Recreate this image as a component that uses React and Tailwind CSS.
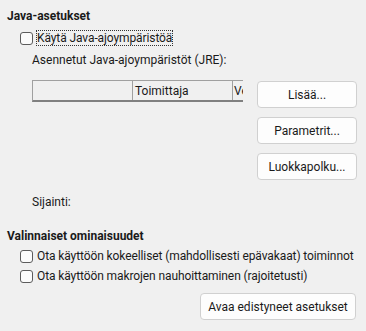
export default function App() {
    const font = { fontFamily: 'Roboto, "Noto Sans", sans-serif' }

    const Check = ({ children, focus }) => (
        <label className="flex items-center h-[20px] pl-[20px] gap-[4px] whitespace-nowrap tracking-[-0.1px]">
            <span className="shrink-0 w-[13px] h-[13px] rounded-[3px] border border-[#5c5c5c] bg-[#fbfbfb]" />
            <span className={focus ? 'outline outline-1 outline-dotted outline-[#333] leading-[14px]' : ''}>{children}</span>
        </label>
    )

    const Btn = ({ children, className = '' }) => (
        <button className={`h-[27px] rounded-[4px] border border-[#d0d0d0] bg-[#fdfdfd] text-[#1a1a1a] ${className}`}>
            {children}
        </button>
    )

    return (
        <div className="w-[366px] h-[331px] bg-[#f0f0f0] text-[12px] leading-[16px] text-[#1a1a1a] overflow-hidden" style={font}>
            <div className="pt-[8px] pl-[7px] font-bold">Java-asetukset</div>
            <div className="mt-[4px]">
                <Check focus>Käytä Java-ajoympäristöä</Check>
            </div>
            <div className="pl-[32px] mt-[4px]">
                <div>Asennetut Java-ajoympäristöt (JRE):</div>
                <div className="flex mt-[12px]">
                    <div className="w-[211px] shrink-0">
                        <div className="h-[22px] flex border-t border-l border-[#a0a0a0] border-b-2 border-b-[#808080] overflow-hidden">
                            <div className="shrink-0 w-[100px] border-r border-[#a0a0a0]" />
                            <div className="shrink-0 w-[100px] border-r border-[#a0a0a0] pl-[2px] leading-[20px]">Toimittaja</div>
                            <div className="shrink-0 w-[10px] pl-[1px] leading-[20px] whitespace-nowrap overflow-hidden">Ve</div>
                        </div>
                    </div>
                    <div className="ml-[14px] mt-[1px] flex flex-col gap-[9px]">
                        <Btn className="w-[100px]">Lisää...</Btn>
                        <Btn className="w-[100px]">Parametrit...</Btn>
                        <Btn className="w-[100px]">Luokkapolku...</Btn>
                    </div>
                </div>
                <div className="mt-[14px]">Sijainti:</div>
            </div>
            <div className="pl-[7px] mt-[18px] font-bold">Valinnaiset ominaisuudet</div>
            <div className="mt-[2px]">
                <Check>Ota käyttöön kokeelliset (mahdollisesti epävakaat) toiminnot</Check>
            </div>
            <Check>Ota käyttöön makrojen nauhoittaminen (rajoitetusti)</Check>
            <div className="flex justify-end pr-[10px] mt-[7px]">
                <Btn className="w-[156px]">Avaa edistyneet asetukset</Btn>
            </div>
        </div>
    )
}
